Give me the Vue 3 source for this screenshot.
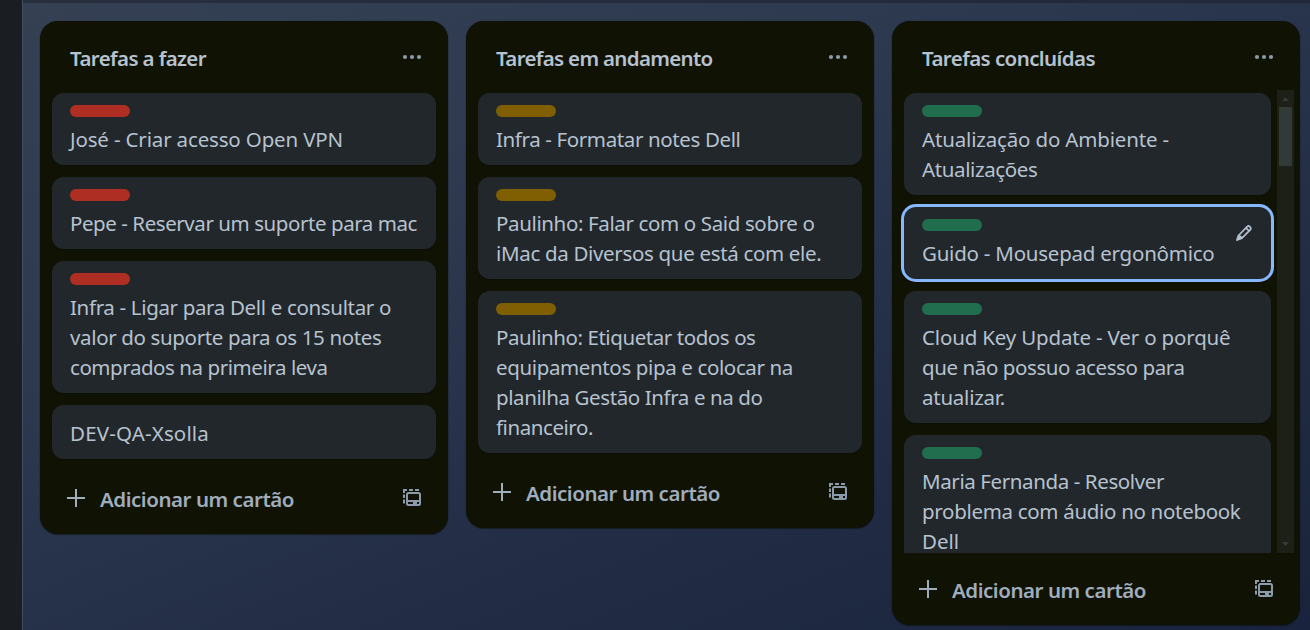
<script setup>
const lists = [
  {
    title: ['Tarefas a fazer', 136],
    tone: 'red',
    add: 194,
    cards: [
      { label: true, lines: [['José - Criar acesso Open VPN', 273]] },
      { label: true, lines: [['Pepe - Reservar um suporte para mac', 347]] },
      {
        label: true,
        lines: [
          ['Infra - Ligar para Dell e consultar o', 321],
          ['valor do suporte para os 15 notes', 311.5],
          ['comprados na primeira leva', 257.5],
        ],
      },
      { label: false, lines: [['DEV-QA-Xsolla', 139]] },
    ],
  },
  {
    title: ['Tarefas em andamento', 216.5],
    tone: 'yellow',
    add: 194,
    cards: [
      { label: true, lines: [['Infra - Formatar notes Dell', 244.5]] },
      {
        label: true,
        lines: [
          ['Paulinho: Falar com o Said sobre o', 318.5],
          ['iMac da Diversos que está com ele.', 325.5],
        ],
      },
      {
        label: true,
        lines: [
          ['Paulinho: Etiquetar todos os', 259.5],
          ['equipamentos pipa e colocar na', 297],
          ['planilha Gestão Infra e na do', 266.5],
          ['financeiro.', 97],
        ],
      },
    ],
  },
  {
    title: ['Tarefas concluídas', 173],
    tone: 'green',
    add: 194,
    scroll: true,
    cards: [
      {
        label: true,
        lines: [
          ['Atualização do Ambiente -', 247],
          ['Atualizações', 115.5],
        ],
      },
      { label: true, active: true, lines: [['Guido - Mousepad ergonômico', 292.5]] },
      {
        label: true,
        lines: [
          ['Cloud Key Update - Ver o porquê', 308.5],
          ['que não possuo acesso para', 262.5],
          ['atualizar.', 83],
        ],
      },
      {
        label: true,
        lines: [
          ['Maria Fernanda - Resolver', 242],
          ['problema com áudio no notebook', 318.5],
          ['Dell', 37],
        ],
      },
    ],
  },
]

// Tracks a line of text so that it fills the given width.
const vFit = {
  mounted(el, { value }) {
    const natural = el.getBoundingClientRect().width
    el.style.letterSpacing = `${(value - natural) / el.textContent.length}px`
  },
}
</script>

<template>
  <div class="app">
    <aside class="rail"></aside>
    <main class="board">
      <div class="topbar"></div>
      <div class="lists">
        <section v-for="list in lists" :key="list.title[0]" class="list" :class="list.tone">
          <header class="head">
            <h2><span v-fit="list.title[1]">{{ list.title[0] }}</span></h2>
            <svg class="dots" width="20" height="6" viewBox="0 0 20 6">
              <circle cx="3" cy="3" r="2.1" />
              <circle cx="10" cy="3" r="2.1" />
              <circle cx="17" cy="3" r="2.1" />
            </svg>
          </header>
          <div class="body" :class="{ scroll: list.scroll }">
            <div class="cards">
              <article v-for="(card, i) in list.cards" :key="i" class="card" :class="{ active: card.active, plain: !card.label }">
                <div v-if="card.label" class="label"></div>
                <p v-for="line in card.lines" :key="line[0]">
                  <span v-fit="line[1]">{{ line[0] }}</span>
                </p>
                <svg v-if="card.active" class="pencil" width="18" height="18" viewBox="0 0 18 18">
                  <path class="edge" d="M4 11 L12.2 2.6 Q13.4 1.4 14.6 2.5 L15.4 3.3 Q16.5 4.4 15.4 5.6 L7 14 Z M11 3.8 L14.2 7" />
                  <path class="tip" d="M2.9 10.6 L7.4 15 L1.7 16.9 Q.8 17 1.1 16.1 Z" />
                </svg>
              </article>
            </div>
            <div v-if="list.scroll" class="bar">
              <svg width="17" height="17" viewBox="0 0 17 17"><path d="M5 11 L8.5 7 L12 11 Z" /></svg>
              <div class="thumb"></div>
              <svg class="down" width="17" height="17" viewBox="0 0 17 17"><path d="M5 6 L8.5 10 L12 6 Z" /></svg>
            </div>
          </div>
          <footer class="foot">
            <svg class="plus" width="18" height="18" viewBox="0 0 18 18"><path d="M9 0 V18 M0 9 H18" /></svg>
            <div class="add"><span v-fit="list.add">Adicionar um cartão</span></div>
            <svg class="template" width="18" height="18" viewBox="0 0 18 18">
              <path class="dash" d="M1 5 V2 H4 M6 2 H10 M12 2 H16 M1 6.5 V10 M1 11.5 V15.5" />
              <rect x="4" y="5" width="13" height="12" rx="1.5" />
              <path class="fill" d="M4 12 H17 V17 H4 Z M5 14 V16 H10 V14 Z M14 14 V16 H16 V14 Z" fill-rule="evenodd" />
            </svg>
          </footer>
        </section>
      </div>
    </main>
  </div>
</template>

<style>
html,
body {
  margin: 0;
  overflow: hidden;
  background: #1a1d21;
}
</style>

<style scoped>
.app {
  display: flex;
  width: 1310px;
  height: 630px;
  overflow: hidden;
  font-family: 'Noto Sans', 'Open Sans', sans-serif;
  font-size: 20.5px;
  line-height: 30px;
  color: #b6c2cf;
}
.rail {
  flex: none;
  width: 22px;
  background: #1a1d21;
}
.board {
  flex: 1;
  box-sizing: border-box;
  border-left: 1px solid #414e63;
  background: linear-gradient(158deg, #354053 0%, #2d3a50 30%, #222d45 68%, #19233d 100%);
}
.topbar {
  height: 3px;
  background: rgba(20, 22, 30, 0.4);
}
.lists {
  display: flex;
  align-items: flex-start;
  gap: 18px;
  padding: 18px 0 0 17px;
}
.list {
  flex: none;
  width: 408px;
  border-radius: 18px;
  background: #101204;
  box-shadow: 0 1px 1px rgba(9, 12, 16, 0.5), 0 0 1px rgba(9, 12, 16, 0.5);
}
.head {
  display: flex;
  justify-content: space-between;
  height: 69px;
  padding: 0 26px 0 30px;
}
h2 {
  margin: 22px 0 0;
  font-size: 20.5px;
  font-weight: 600;
  white-space: nowrap;
}
.dots {
  margin-top: 33px;
  fill: #8c9bab;
}
.body {
  display: flex;
  padding: 0 12px;
}
.body.scroll {
  height: 463px;
  padding-right: 6px;
  overflow: hidden;
}
.cards {
  flex: 1;
  display: flex;
  flex-direction: column;
  gap: 12px;
  padding: 3px 0;
}
.scroll .cards {
  margin-right: 6px;
}
.card {
  position: relative;
  flex: none;
  padding: 12px 0 11px 18px;
  border-radius: 12px;
  background: #22272b;
  box-shadow: 0 1px 1px rgba(9, 12, 16, 0.5), 0 0 1px rgba(60, 66, 72, 0.4);
}
.card.plain {
  padding-top: 13px;
}
.card.active {
  box-shadow: 0 0 0 3px #85b8ff;
}
.card p {
  margin: 0;
  white-space: nowrap;
}
.label {
  width: 60px;
  height: 12px;
  margin-bottom: 7px;
  border-radius: 6px;
}
.red .label {
  background: #ae2e24;
}
.yellow .label {
  background: #7f5f01;
}
.green .label {
  background: #216e4e;
}
.pencil {
  position: absolute;
  top: 17px;
  right: 18px;
}
.pencil .edge {
  fill: none;
  stroke: #b6c2cf;
  stroke-width: 1.7;
}
.pencil .tip {
  fill: #b6c2cf;
}
.bar {
  display: flex;
  flex-direction: column;
  flex: none;
  width: 17px;
  background: #1d2017;
}
.bar svg {
  fill: #333b38;
}
.bar .down {
  margin-top: auto;
}
.thumb {
  width: 13px;
  height: 59px;
  margin: 0 2px;
  background: #323a38;
}
.foot {
  display: flex;
  height: 72px;
  padding: 0 27px;
  color: #9fadbc;
  font-weight: 600;
  white-space: nowrap;
}
.plus {
  margin-top: 27px;
  fill: none;
  stroke: #9fadbc;
  stroke-width: 2;
}
.add {
  flex: 1;
  margin: 22px 0 0 15px;
}
.template {
  margin-top: 26px;
}
.template .dash,
.template rect {
  fill: none;
  stroke: #8c9bab;
  stroke-width: 2;
}
.template .fill {
  fill: #8c9bab;
}
</style>
